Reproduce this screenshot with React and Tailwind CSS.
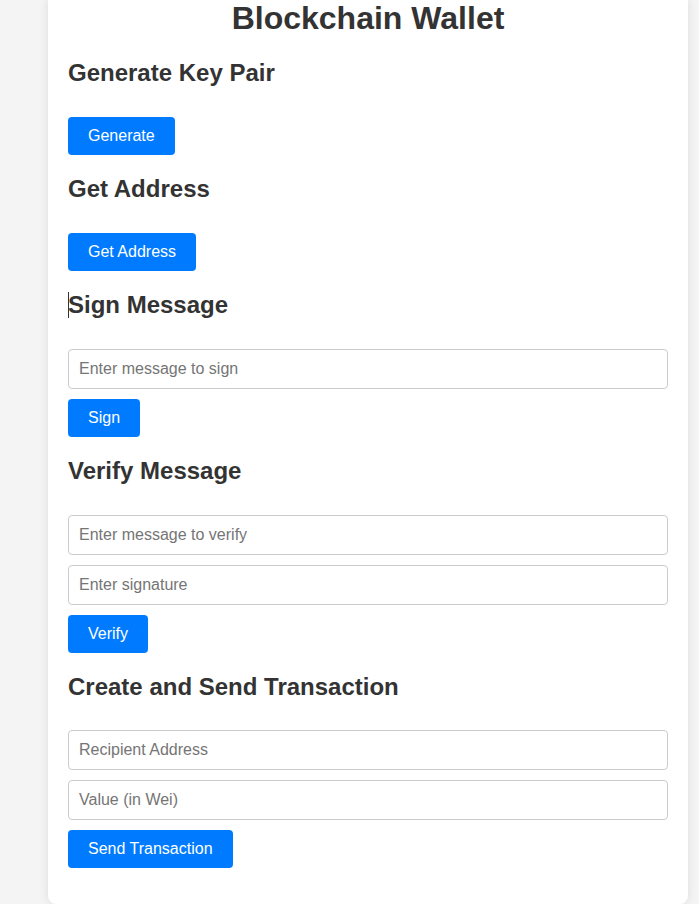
const SECTIONS = [
  { title: 'Generate Key Pair', inputs: [], button: 'Generate' },
  { title: 'Get Address', inputs: [], button: 'Get Address' },
  { title: 'Sign Message', inputs: ['Enter message to sign'], button: 'Sign', caret: true },
  { title: 'Verify Message', inputs: ['Enter message to verify', 'Enter signature'], button: 'Verify' },
  { title: 'Create and Send Transaction', inputs: ['Recipient Address', 'Value (in Wei)'], button: 'Send Transaction', last: true },
]

export default function App() {
  return (
    <div className="min-h-[904px] bg-[#f4f4f4] text-[#333]" style={{ fontFamily: '"Liberation Sans", Arial, sans-serif' }}>
      <div className="ml-[48px] w-[640px] bg-white rounded-b-[8px] shadow-[0_0_10px_rgba(0,0,0,0.1)] px-[20px] pb-[36px]">
        <h1 className="text-[32px] leading-[37px] font-bold text-center">Blockchain Wallet</h1>

        {SECTIONS.map(({ title, inputs, button, caret, last }, i) => (
          <div key={title} className={i === 0 ? 'mt-[22px]' : 'mt-[20px]'}>
            <h2 className="relative text-[24px] leading-[28px] font-bold">
              {caret && <span className="absolute left-0 top-[1px] w-px h-[26px] bg-[#333]" />}
              {title}
            </h2>
            <div className={`${last ? 'mt-[29px]' : 'mt-[30px]'} flex flex-col gap-[10px] items-start`}>
              {inputs.map(p => (
                <input
                  key={p}
                  placeholder={p}
                  className="w-[600px] h-[40px] px-[10px] border border-[#ccc] rounded-[4px] text-[16px] placeholder:text-[#757575] outline-none"
                />
              ))}
              <button className="h-[38px] px-[20px] bg-[#007bff] text-white text-[16px] rounded-[4px]">
                {button}
              </button>
            </div>
          </div>
        ))}
      </div>
    </div>
  )
}
